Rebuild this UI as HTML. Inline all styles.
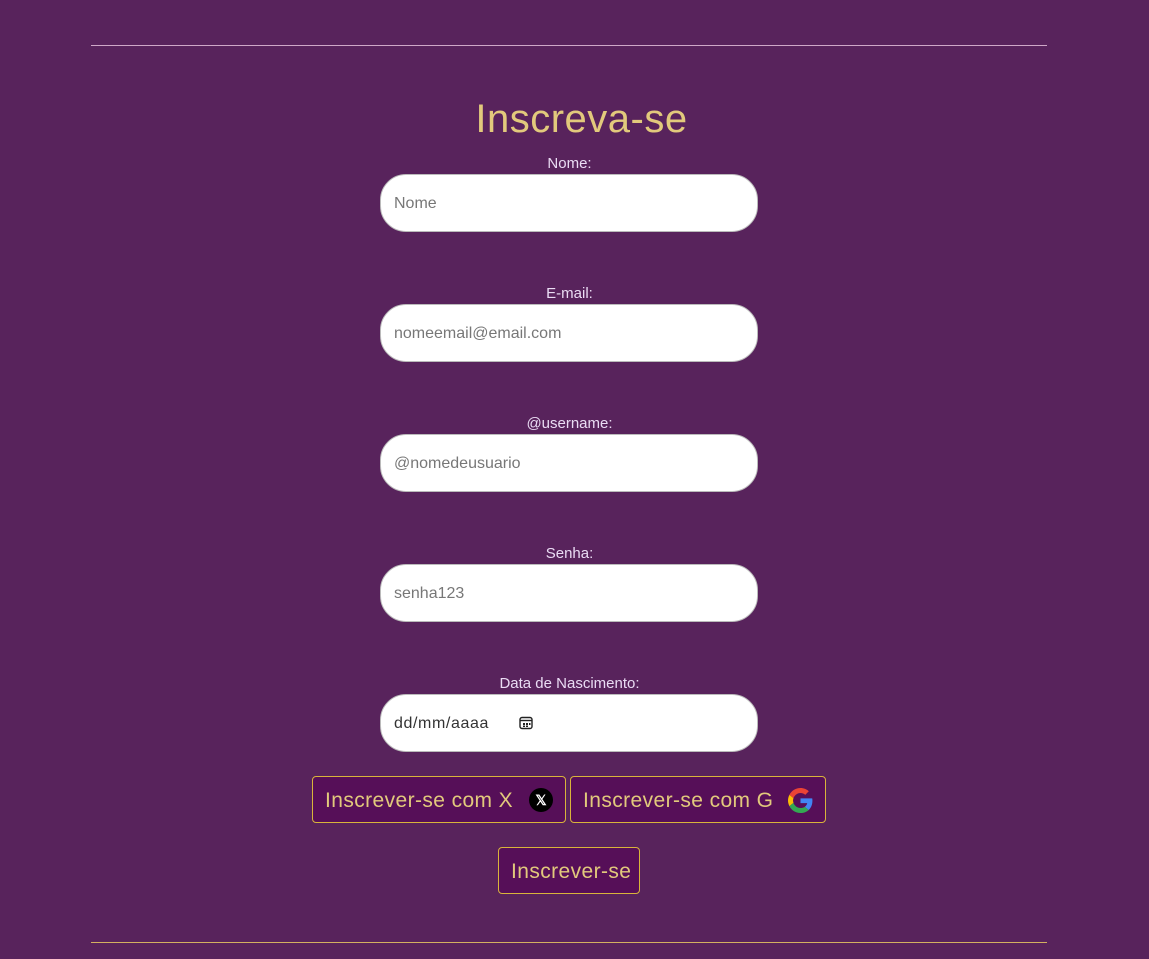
<!DOCTYPE html>
<html><head><meta charset="utf-8"><style>
*{box-sizing:border-box;margin:0;padding:0}
body{width:1149px;height:959px;background:#58235c;font-family:"Liberation Sans",sans-serif;position:relative;overflow:hidden}
.hr{position:absolute;left:91px;width:956px;height:1px;background:#d4b060}
h1{position:absolute;top:97px;left:0;width:1149px;text-align:center;color:#e2c97c;font-weight:normal;font-size:40px;letter-spacing:0.5px;padding-left:14px}
.lab{position:absolute;left:0;width:1149px;text-align:center;color:#eadcf4;font-size:15px;padding-right:10px}
.inp{position:absolute;left:380px;width:378px;height:58px;background:#fff;border:1px solid #bbb;border-radius:26px;padding-left:13px;line-height:58px;font-size:16px;color:#777}
.btn{position:absolute;top:776px;height:47px;border:1px solid #d9b43b;border-radius:4px;background:#560f58;color:#e2c97c;font-size:21px;line-height:47px;padding-left:12px;letter-spacing:0.4px}
</style></head><body>
<div class="hr" style="top:45px;background:#cfa8c8"></div>
<h1>Inscreva-se</h1>
<div class="lab" style="top:155px">Nome:</div>
<div class="inp" style="top:174px">Nome</div>
<div class="lab" style="top:285px">E-mail:</div>
<div class="inp" style="top:304px">nomeemail@email.com</div>
<div class="lab" style="top:415px">@username:</div>
<div class="inp" style="top:434px">@nomedeusuario</div>
<div class="lab" style="top:545px">Senha:</div>
<div class="inp" style="top:564px">senha123</div>
<div class="lab" style="top:675px">Data de Nascimento:</div>
<div class="inp" style="top:694px;color:#333;letter-spacing:0.6px">dd/mm/aaaa
<svg style="position:absolute;left:138px;top:21px" width="14" height="14" viewBox="0 0 14 14"><rect x="1" y="1.5" width="12" height="11" rx="2" fill="none" stroke="#222" stroke-width="1.4"/><line x1="1" y1="4.5" x2="13" y2="4.5" stroke="#222" stroke-width="1.4"/><rect x="4" y="7" width="2" height="2" fill="#222"/><rect x="7" y="7" width="2" height="2" fill="#222"/><rect x="10" y="7" width="1.5" height="2" fill="#222"/><rect x="4" y="9.5" width="2" height="1.5" fill="#222"/><rect x="7" y="9.5" width="2" height="1.5" fill="#222"/></svg></div>
<div class="btn" style="left:312px;width:254px">Inscrever-se com X
<span style="position:absolute;left:216px;top:11px;width:24px;height:24px;border-radius:50%;background:#000;color:#fff;font-size:14px;line-height:24px;text-align:center;font-weight:bold;letter-spacing:0">𝕏</span></div>
<div class="btn" style="left:570px;width:256px">Inscrever-se com G
<svg style="position:absolute;left:217px;top:11px" width="25" height="25" viewBox="0 0 48 48"><path fill="#EA4335" d="M24 9.5c3.5 0 6.6 1.2 9.1 3.6l6.8-6.8C35.8 2.4 30.3 0 24 0 14.6 0 6.600 5.4 2.7 13.2l7.9 6.2C12.5 13.6 17.8 9.5 24 9.5z"/><path fill="#4285F4" d="M46.9 24.5c0-1.6-.1-3.1-.4-4.5H24v9h12.9c-.6 3-2.3 5.5-4.8 7.2l7.7 6c4.5-4.200 7.1-10.3 7.1-17.7z"/><path fill="#FBBC05" d="M10.5 28.6c-.5-1.4-.8-3-.8-4.6s.3-3.2.8-4.6l-7.9-6.2C1 16.5 0 20.1 0 24s1 7.5 2.7 10.8l7.8-6.2z"/><path fill="#34A853" d="M24 48c6.5 0 11.9-2.1 15.900-5.8l-7.7-6c-2.200 1.5-5 2.3-8.2 2.3-6.2 0-11.5-4.2-13.4-9.9l-7.9 6.2C6.6 42.6 14.6 48 24 48z"/></svg></div>
<div class="btn" style="top:847px;left:498px;width:142px">Inscrever-se</div>
<div class="hr" style="top:942px"></div>
</body></html>
